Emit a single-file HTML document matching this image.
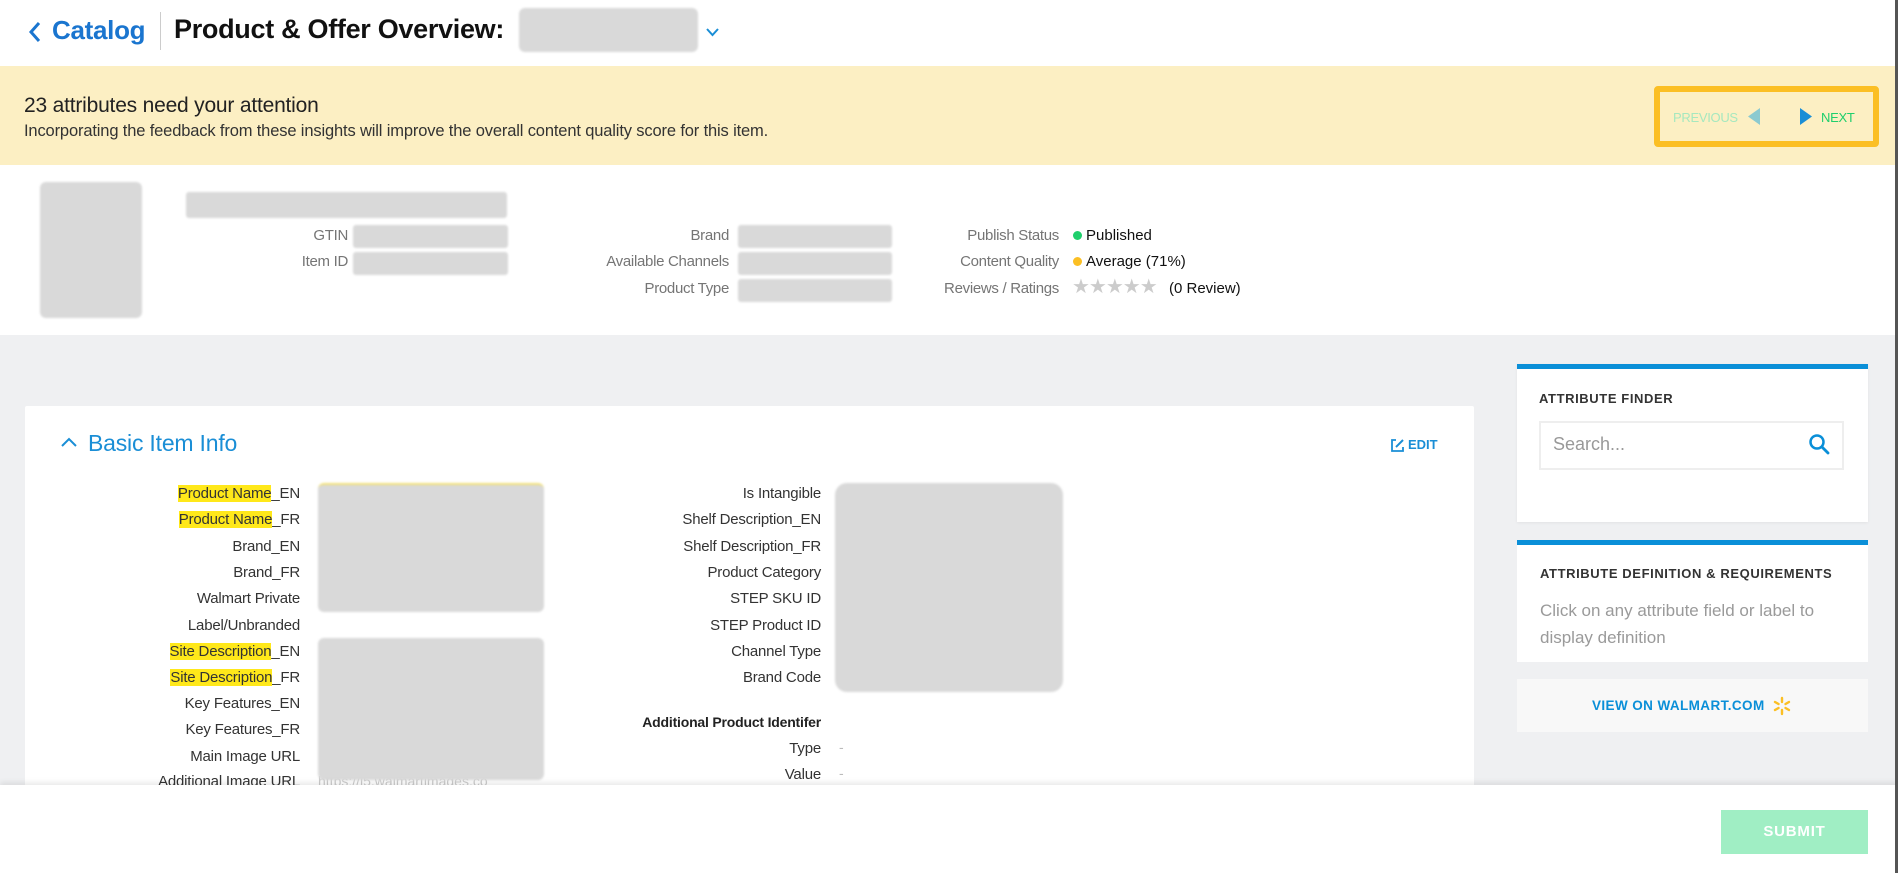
<!DOCTYPE html>
<html><head><meta charset="utf-8"><style>
*{margin:0;padding:0;box-sizing:border-box}
body{width:1898px;height:873px;overflow:hidden;position:relative;font-family:"Liberation Sans",sans-serif;background:#fff;color:#333}
.a{position:absolute;white-space:nowrap}
.blur{position:absolute;background:#d9d9d9;border-radius:6px;filter:blur(1px)}
.lbl{position:absolute;text-align:right;font-size:15px;color:#757575;white-space:nowrap;letter-spacing:-0.3px}
.fl{position:absolute;text-align:right;font-size:15px;color:#333;white-space:nowrap;letter-spacing:-0.2px;line-height:20px}
.hl{background:#ffe81a}
</style></head><body>
<!-- header -->
<div class="a" style="left:0;top:0;width:1898px;height:66px;background:#fff"></div>
<svg class="a" style="left:28px;top:20px" width="14" height="24" viewBox="0 0 14 24"><path d="M11 3 L3 12 L11 21" fill="none" stroke="#1a75cf" stroke-width="3"/></svg>
<div class="a" style="left:52px;top:15px;font-size:26px;font-weight:bold;color:#1a75cf;letter-spacing:-0.3px">Catalog</div>
<div class="a" style="left:160px;top:12px;width:1px;height:38px;background:#ccc"></div>
<div class="a" style="left:174px;top:14px;font-size:27px;font-weight:bold;color:#111;letter-spacing:-0.3px">Product &amp; Offer Overview:</div>
<div class="blur" style="left:519px;top:8px;width:179px;height:44px"></div>
<svg class="a" style="left:705px;top:27px" width="15" height="10" viewBox="0 0 15 10"><path d="M2 2 L7.5 8 L13 2" fill="none" stroke="#1a8ed6" stroke-width="2"/></svg>
<!-- banner -->
<div class="a" style="left:0;top:66px;width:1898px;height:99px;background:#fcefc3"></div>
<div class="a" style="left:24px;top:94px;font-size:21px;color:#222;letter-spacing:-0.2px">23 attributes need your attention</div>
<div class="a" style="left:24px;top:122px;font-size:16.5px;color:#333;letter-spacing:-0.15px">Incorporating the feedback from these insights will improve the overall content quality score for this item.</div>
<div class="a" style="left:1654px;top:86px;width:225px;height:61px;border:6px solid #fbbf24;border-radius:4px;background:#fcefc3"></div>
<div class="a" style="left:1673px;top:110px;font-size:13px;color:#a6e8bf;letter-spacing:-0.3px">PREVIOUS</div>
<svg class="a" style="left:1747px;top:108px" width="14" height="18"><path d="M13 0 L13 17 L1 8.5Z" fill="#8ccad0"/></svg>
<svg class="a" style="left:1799px;top:108px" width="14" height="18"><path d="M1 0 L1 17 L13 8.5Z" fill="#1a8ed6"/></svg>
<div class="a" style="left:1821px;top:110px;font-size:13px;color:#1fcf6c;letter-spacing:-0.3px">NEXT</div>
<!-- info -->
<div class="blur" style="left:40px;top:182px;width:102px;height:136px"></div>
<div class="blur" style="left:186px;top:192px;width:321px;height:26px;border-radius:3px"></div>
<div class="lbl" style="right:1550px;top:227px">GTIN</div>
<div class="lbl" style="right:1550px;top:253px">Item ID</div>
<div class="blur" style="left:353px;top:225px;width:155px;height:23px;border-radius:3px"></div>
<div class="blur" style="left:353px;top:252px;width:155px;height:23px;border-radius:3px"></div>
<div class="lbl" style="right:1169px;top:227px">Brand</div>
<div class="lbl" style="right:1169px;top:253px">Available Channels</div>
<div class="lbl" style="right:1169px;top:280px">Product Type</div>
<div class="blur" style="left:738px;top:225px;width:154px;height:23px;border-radius:3px"></div>
<div class="blur" style="left:738px;top:252px;width:154px;height:23px;border-radius:3px"></div>
<div class="blur" style="left:738px;top:279px;width:154px;height:23px;border-radius:3px"></div>
<div class="lbl" style="right:839px;top:227px">Publish Status</div>
<div class="lbl" style="right:839px;top:253px">Content Quality</div>
<div class="lbl" style="right:839px;top:280px">Reviews / Ratings</div>
<div class="a" style="left:1073px;top:231px;width:9px;height:9px;border-radius:50%;background:#1fcf6c"></div>
<div class="a" style="left:1086px;top:227px;font-size:15px;color:#111">Published</div>
<div class="a" style="left:1073px;top:257px;width:9px;height:9px;border-radius:50%;background:#fbbf24"></div>
<div class="a" style="left:1086px;top:253px;font-size:15px;color:#111">Average (71%)</div>
<div class="a" style="left:1072px;top:274px;font-size:20px;color:#ccc;letter-spacing:-1px">★★★★★</div>
<div class="a" style="left:1169px;top:280px;font-size:15px;color:#111">(0 Review)</div>
<!-- gray area -->
<div class="a" style="left:0;top:335px;width:1898px;height:450px;background:#eff0f2"></div>
<div class="a" style="left:25px;top:406px;width:1449px;height:400px;background:#fff;border-radius:2px"></div>
<svg class="a" style="left:60px;top:436px" width="18" height="12"><path d="M2 10 L9 3 L16 10" fill="none" stroke="#1a8ed6" stroke-width="2"/></svg>
<div class="a" style="left:88px;top:430px;font-size:23px;color:#1a8ed6;letter-spacing:-0.2px">Basic Item Info</div>
<svg class="a" style="left:1390px;top:438px" width="15" height="15" viewBox="0 0 15 15"><path d="M6 2 H2 V13 H13 V9" fill="none" stroke="#1a8ed6" stroke-width="1.8"/><path d="M6 9 L13 2" stroke="#1a8ed6" stroke-width="2"/></svg>
<div class="a" style="left:1408px;top:437px;font-size:13px;font-weight:bold;color:#1a8ed6">EDIT</div>
<div class="fl" style="right:1598px;top:484px"><span class="hl">Product Name</span>_EN</div>
<div class="fl" style="right:1598px;top:510px"><span class="hl">Product Name</span>_FR</div>
<div class="fl" style="right:1598px;top:537px">Brand_EN</div>
<div class="fl" style="right:1598px;top:563px">Brand_FR</div>
<div class="fl" style="right:1598px;top:589px">Walmart Private</div>
<div class="fl" style="right:1598px;top:616px">Label/Unbranded</div>
<div class="fl" style="right:1598px;top:642px"><span class="hl">Site Description</span>_EN</div>
<div class="fl" style="right:1598px;top:668px"><span class="hl">Site Description</span>_FR</div>
<div class="fl" style="right:1598px;top:694px">Key Features_EN</div>
<div class="fl" style="right:1598px;top:720px">Key Features_FR</div>
<div class="fl" style="right:1598px;top:747px">Main Image URL</div>
<div class="fl" style="right:1598px;top:772px">Additional Image URL</div>
<div class="a" style="left:318px;top:773px;font-size:14px;color:#ccc">https://i5.walmartimages.co</div>
<div class="blur" style="left:318px;top:483px;width:226px;height:129px;border-top:2px solid #f3e27a"></div>
<div class="blur" style="left:318px;top:638px;width:226px;height:142px"></div>
<div class="fl" style="right:1077px;top:484px">Is Intangible</div>
<div class="fl" style="right:1077px;top:510px">Shelf Description_EN</div>
<div class="fl" style="right:1077px;top:537px">Shelf Description_FR</div>
<div class="fl" style="right:1077px;top:563px">Product Category</div>
<div class="fl" style="right:1077px;top:589px">STEP SKU ID</div>
<div class="fl" style="right:1077px;top:616px">STEP Product ID</div>
<div class="fl" style="right:1077px;top:642px">Channel Type</div>
<div class="fl" style="right:1077px;top:668px">Brand Code</div>
<div class="blur" style="left:835px;top:483px;width:228px;height:209px;border-radius:12px"></div>
<div class="fl" style="right:1077px;top:712px;font-weight:bold;font-size:14px;color:#222">Additional Product Identifer</div>
<div class="fl" style="right:1077px;top:739px">Type</div>
<div class="fl" style="right:1077px;top:765px">Value</div>
<div class="a" style="left:839px;top:739px;font-size:14px;color:#bbb">-</div>
<div class="a" style="left:839px;top:765px;font-size:14px;color:#bbb">-</div>
<!-- sidebar -->
<div class="a" style="left:1517px;top:364px;width:351px;height:158px;background:#fff;border-top:5px solid #0a8fd8;box-shadow:0 1px 3px rgba(0,0,0,.06)"></div>
<div class="a" style="left:1539px;top:391px;font-size:13px;font-weight:bold;color:#333;letter-spacing:0.6px">ATTRIBUTE FINDER</div>
<div class="a" style="left:1539px;top:421px;width:305px;height:49px;border:2px solid #eee;background:#fff"></div>
<div class="a" style="left:1553px;top:434px;font-size:18px;color:#999">Search...</div>
<svg class="a" style="left:1808px;top:433px" width="22" height="22" viewBox="0 0 22 22"><circle cx="9" cy="9" r="6.5" fill="none" stroke="#0a8fd8" stroke-width="2.5"/><path d="M14 14 L20 20" stroke="#0a8fd8" stroke-width="2.8" stroke-linecap="round"/></svg>
<div class="a" style="left:1517px;top:540px;width:351px;height:122px;background:#fff;border-top:5px solid #0a8fd8"></div>
<div class="a" style="left:1540px;top:566px;font-size:13px;font-weight:bold;color:#333;letter-spacing:0.6px">ATTRIBUTE DEFINITION &amp; REQUIREMENTS</div>
<div class="a" style="left:1540px;top:597px;font-size:17px;color:#9a9a9a;line-height:27px;white-space:normal;width:320px">Click on any attribute field or label to display definition</div>
<div class="a" style="left:1517px;top:679px;width:351px;height:53px;background:#f8f8f8"></div>
<div class="a" style="left:1592px;top:698px;font-size:13.5px;font-weight:bold;color:#0a8fd8;letter-spacing:0.4px">VIEW ON WALMART.COM</div>
<svg class="a" style="left:1772px;top:696px" width="20" height="20" viewBox="0 0 20 20"><g stroke="#fbbf24" stroke-width="2.4" stroke-linecap="round"><path d="M10 2 V6"/><path d="M10 14 V18"/><path d="M3 6 L6.5 8"/><path d="M17 6 L13.5 8"/><path d="M3 14 L6.5 12"/><path d="M17 14 L13.5 12"/></g></svg>
<!-- footer -->
<div class="a" style="left:0;top:785px;width:1898px;height:88px;background:#fff;box-shadow:0 -3px 5px rgba(0,0,0,.08)"></div>
<div class="a" style="left:1721px;top:810px;width:147px;height:44px;background:#a0eec4;color:#fff;font-weight:bold;font-size:15px;text-align:center;line-height:44px;letter-spacing:0.8px">SUBMIT</div>
<div class="a" style="left:1895px;top:0;width:3px;height:873px;background:#555"></div>
</body></html>
